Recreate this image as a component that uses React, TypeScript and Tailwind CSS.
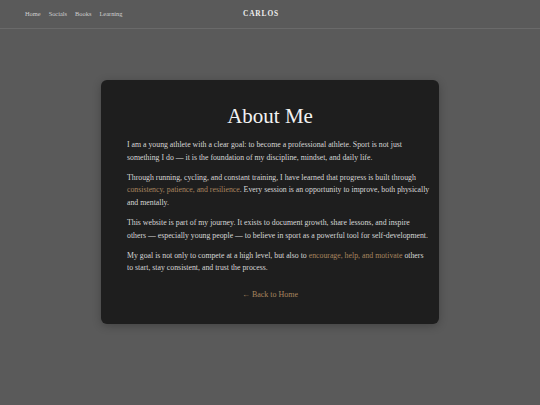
export default function App() {
  const accent = "text-[#a8855e]";
  return (
    <div className="min-h-screen w-full bg-[#5a5a5a] font-['Liberation_Serif',Georgia,serif] text-[#d6d6d6]">
      {/* top bar */}
      <header className="relative flex h-[29px] items-center border-b border-[#6a6a6a] px-[25px]">
        <nav className="flex gap-[8px] text-[6.4px] text-[#cfcfcf]">
          <span>Home</span>
          <span>Socials</span>
          <span>Books</span>
          <span>Learning</span>
        </nav>
        <div className="absolute left-[261px] -translate-x-1/2 text-[7.4px] font-bold tracking-[0.9px] text-[#eeeeee]">
          CARLOS
        </div>
      </header>

      <main className="flex justify-center pt-[51px]">
        <section className="w-[338px] rounded-[6px] bg-[#1e1e1e] px-[26px] pb-[23px] pt-[22px] shadow-[0_2px_8px_rgba(0,0,0,0.25)]">
          <h1 className="mb-[9px] text-center text-[21px] leading-[28px] text-[#f2f2f2]">About Me</h1>
          <div className="space-y-[7.5px] whitespace-nowrap text-[7.8px] leading-[12.6px]">
            <p>
              I am a young athlete with a clear goal: to become a professional athlete. Sport is not just
              <br />
              something I do — it is the foundation of my discipline, mindset, and daily life.
            </p>
            <p>
              Through running, cycling, and constant training, I have learned that progress is built through
              <br />
              <span className={accent}>consistency, patience, and resilience</span>. Every session is an opportunity to
              improve, both physically
              <br />
              and mentally.
            </p>
            <p>
              This website is part of my journey. It exists to document growth, share lessons, and inspire
              <br />
              others — especially young people — to believe in sport as a powerful tool for self-development.
            </p>
            <p>
              My goal is not only to compete at a high level, but also to{" "}
              <span className={accent}>encourage, help, and motivate</span> others
              <br />
              to start, stay consistent, and trust the process.
            </p>
          </div>
          <div className={`mt-[14px] text-center text-[8px] ${accent}`}>← Back to Home</div>
        </section>
      </main>
    </div>
  );
}
